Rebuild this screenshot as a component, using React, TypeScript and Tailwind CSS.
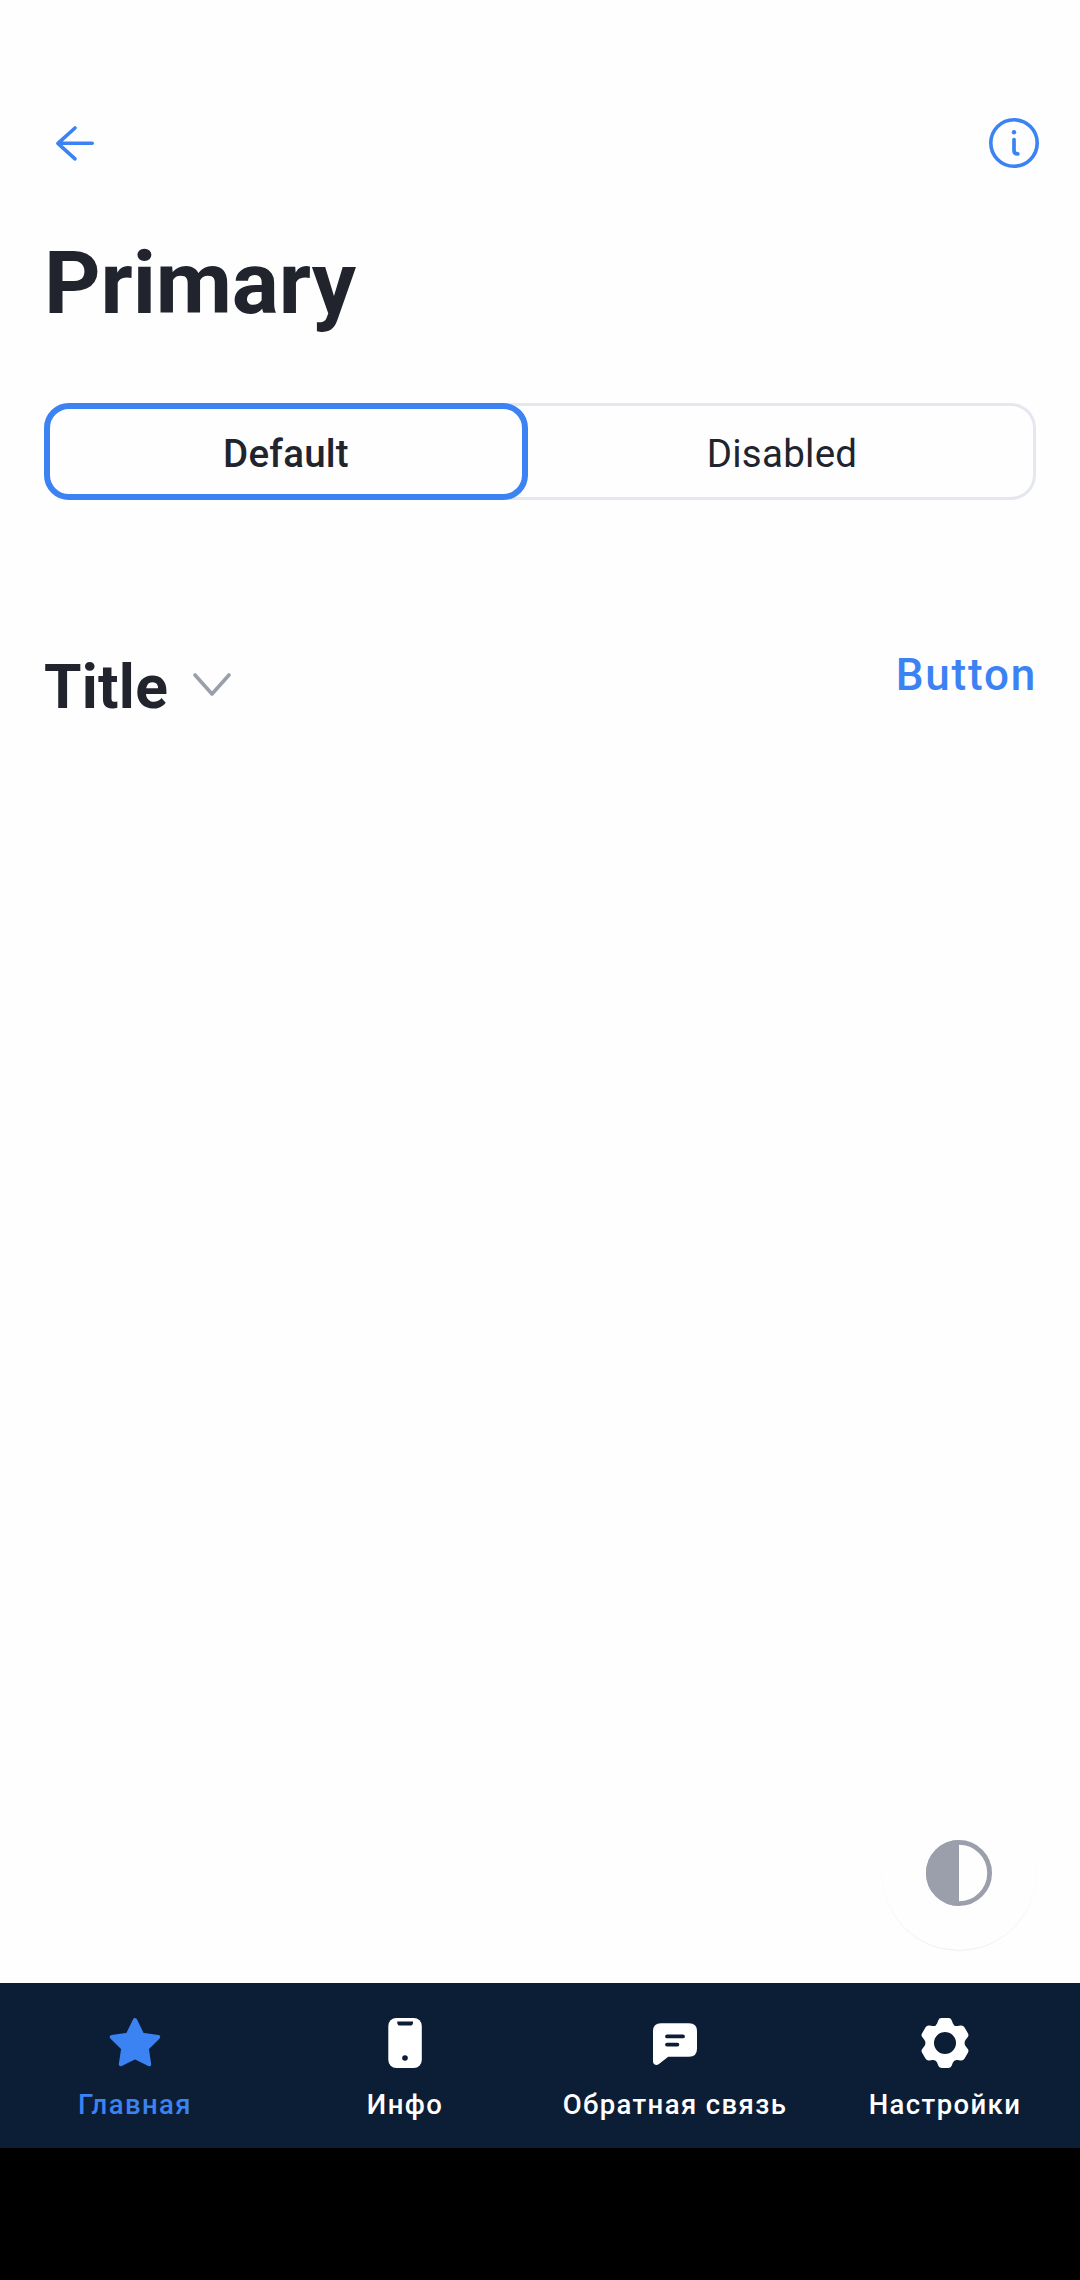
import type { ReactNode } from "react";

function BackIcon() {
  return (
    <svg width="66" height="66" viewBox="0 0 66 66" fill="none" stroke="#3b82f3" strokeWidth="3.6" strokeLinecap="round" strokeLinejoin="round">
      <path d="M51.2 33.3H17M34 18L16.9 33.3L34 48.8" />
    </svg>
  );
}

function InfoIcon() {
  return (
    <svg width="66" height="66" viewBox="0 0 66 66" fill="none" stroke="#3b82f3" strokeWidth="3.6" strokeLinecap="round">
      <circle cx="33" cy="33" r="23.2" />
      <path d="M33 29.6V40.2Q33 43.9 36.8 43.9" strokeWidth="3.7" />
      <circle cx="33" cy="22.2" r="2.2" fill="#3b82f3" stroke="none" />
    </svg>
  );
}

function StarIcon() {
  return (
    <svg width="66" height="66" viewBox="0 0 66 66" fill="currentColor" stroke="currentColor" strokeWidth="4" strokeLinejoin="round">
      <path d="M33 10L40.3 24.8L56.2 27L44.8 38.4L47.2 54.2L33 47.1L18.8 54.2L21.2 38.4L9.8 27L25.7 24.8Z" />
    </svg>
  );
}

function PhoneIcon() {
  return (
    <svg width="66" height="66" viewBox="0 0 66 66">
      <rect x="16.3" y="8" width="33.5" height="50" rx="8" fill="currentColor" />
      <path d="M25.3 11.6H41V12.8Q41 15.6 38.2 15.6H28.1Q25.3 15.6 25.3 12.8Z" fill="#0c1d36" />
      <circle cx="33" cy="48" r="2.8" fill="#0c1d36" />
    </svg>
  );
}

function ChatIcon() {
  return (
    <svg width="66" height="66" viewBox="0 0 66 66">
      <path d="M19 13.2H47Q55 13.2 55 21.2V38.8Q55 46.8 47 46.8H26.2L17 54Q14.8 55.6 12.6 54.6Q11 53.7 11 51.6V21.2Q11 13.2 19 13.2Z" fill="currentColor" />
      <path d="M25 26.4H41M25 34.6H35.4" stroke="#0c1d36" strokeWidth="3.8" strokeLinecap="round" />
    </svg>
  );
}

function GearIcon() {
  return (
    <svg width="66" height="66" viewBox="0 0 66 66">
      <path
        fill="currentColor"
        fillRule="evenodd"
        d="M29.5 8H36.5Q39 8 39.8 10.4L40.9 13.4Q42.3 16.6 45.4 16L48.6 15.5Q51.1 15.1 52.4 17.2L55.9 23.3Q57.2 25.4 55.6 27.3L53.5 29.9Q51.6 33 53.5 36.1L55.6 38.7Q57.2 40.6 55.9 42.7L52.4 48.8Q51.1 50.9 48.6 50.5L45.4 50Q42.3 49.4 40.9 52.6L39.8 55.6Q39 58 36.5 58H29.5Q27 58 26.2 55.6L25.1 52.6Q23.7 49.4 20.6 50L17.4 50.5Q14.9 50.9 13.6 48.8L10.1 42.7Q8.8 40.6 10.4 38.7L12.5 36.1Q14.4 33 12.5 29.9L10.4 27.3Q8.8 25.4 10.1 23.3L13.6 17.2Q14.9 15.1 17.4 15.5L20.6 16Q23.7 16.6 25.1 13.4L26.2 10.4Q27 8 29.5 8ZM33 22A11 11 0 1 0 33 44A11 11 0 1 0 33 22Z"
      />
    </svg>
  );
}

function NavItem({ icon, label, active = false }: { icon: ReactNode; label: string; active?: boolean }) {
  return (
    <button className={`flex flex-1 flex-col items-center pt-[27px] ${active ? "text-[#3b82f3]" : "text-white"}`}>
      {icon}
      <span className="mt-[13px] whitespace-nowrap text-[27.5px] leading-8 font-medium tracking-[1.4px]">{label}</span>
    </button>
  );
}

export default function App() {
  return (
    <div className="flex h-[2280px] w-[1080px] flex-col bg-[#fefefe] font-['Roboto',sans-serif] text-[#21242d]">
      <header className="flex justify-between pt-[110px] pr-[33px] pl-[41px]">
        <button aria-label="Back"><BackIcon /></button>
        <button aria-label="Info"><InfoIcon /></button>
      </header>

      <h1 className="mt-[55px] ml-[44px] text-[88px] leading-[104px] font-bold tracking-[-0.15px]">Primary</h1>

      <div className="mx-[44px] mt-[68px] flex h-[97px] rounded-[25px] text-[38.5px] tracking-[0.25px] shadow-[inset_0_0_0_3px_#e4e7ed]">
        <button className="h-full w-[484px] rounded-[25px] border-[6px] border-[#3b82f3] pt-[5px] font-medium">Default</button>
        <button className="h-full flex-1 pt-[5px]">Disabled</button>
      </div>

      <div className="mx-[44px] mt-[149px] flex items-start justify-between">
        <div className="flex items-start">
          <h2 className="pt-[3px] text-[60.5px] leading-[72px] font-bold tracking-[0.3px]">Title</h2>
          <svg className="mt-[22px] ml-[24px]" width="42" height="30" viewBox="0 0 42 30" fill="none" stroke="#9a9fab" strokeWidth="3.6" strokeLinecap="round" strokeLinejoin="round">
            <path d="M3 4L20 23L37 4" />
          </svg>
        </div>
        <button className="-mr-px text-[44px] leading-[52px] font-medium tracking-[1.8px] text-[#3b82f3]">Button</button>
      </div>

      <div className="mt-auto mr-[44px] mb-[33px] flex size-[154px] items-center justify-center self-end rounded-full bg-[#fefefe] shadow-[0_1px_1px_-0.5px_rgba(0,0,0,0.12)]">
        <svg width="66" height="66" viewBox="0 0 66 66">
          <circle cx="33" cy="33" r="30.6" fill="none" stroke="#9a9fab" strokeWidth="4.8" />
          <path d="M33 0A33 33 0 0 0 33 66Z" fill="#9a9fab" />
        </svg>
      </div>

      <nav className="flex h-[165px] shrink-0 bg-[#0c1d36]">
        <NavItem icon={<StarIcon />} label="Главная" active />
        <NavItem icon={<PhoneIcon />} label="Инфо" />
        <NavItem icon={<ChatIcon />} label="Обратная связь" />
        <NavItem icon={<GearIcon />} label="Настройки" />
      </nav>
      <div className="h-[132px] shrink-0 bg-black" />
    </div>
  );
}
